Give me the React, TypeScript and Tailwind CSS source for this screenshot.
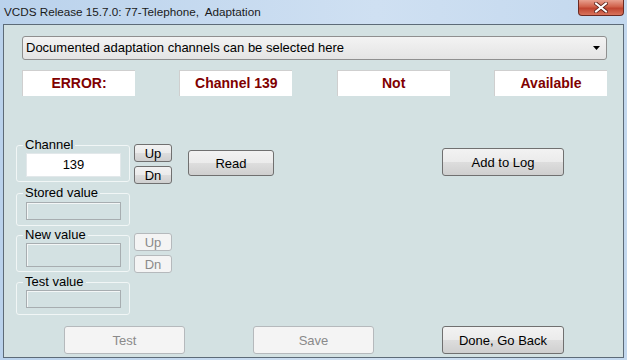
import React from 'react';

const font = { fontFamily: '"Liberation Sans", Arial, sans-serif' };

const Btn: React.FC<{ label: string; className?: string; disabled?: boolean }> = ({ label, className = '', disabled }) => (
    <button
        disabled={disabled}
        className={
            'flex items-center justify-center rounded-[3px] border text-[13px] leading-none ' +
            (disabled
                ? 'border-[#b5b9bc] bg-[#f4f4f4] text-[#8a8a8a] '
                : 'border-[#707070] bg-[linear-gradient(#f2f2f2_0%,#ebebeb_50%,#dddddd_51%,#cfcfcf_100%)] text-black ') +
            className
        }
    >
        {label}
    </button>
);

const Group: React.FC<{ label: string; children: React.ReactNode; className?: string }> = ({ label, children, className = '' }) => (
    <fieldset className={'w-[114px] rounded-[3px] border border-[#f1f6f6] pl-[9px] ' + className}>
        <legend className="-ml-[3px] px-[2px] text-[13px] leading-[14px] text-black">{label}</legend>
        {children}
    </fieldset>
);

const Status: React.FC<{ text: string }> = ({ text }) => (
    <div className="flex h-[26px] w-[113px] items-center justify-center border-l border-t border-[#cfcfcf] bg-white text-[14px] font-bold text-[#800000]">
        {text}
    </div>
);

const UpDn: React.FC<{ disabled?: boolean; className?: string }> = ({ disabled, className = '' }) => (
    <div className={'ml-[4px] flex flex-col gap-[4px] ' + className}>
        <Btn label="Up" disabled={disabled} className="h-[18px] w-[38px]" />
        <Btn label="Dn" disabled={disabled} className="h-[18px] w-[38px]" />
    </div>
);

export default function App() {
    return (
        <div style={font} className="flex h-[360px] w-[627px] flex-col overflow-hidden bg-[linear-gradient(90deg,#bad2ec,#cfe0f2_60%,#c3d8ee)]">
            {/* Title bar */}
            <div className="relative flex h-[24px] shrink-0 items-center pl-[4px]">
                <span className="whitespace-pre text-[11.7px] text-[#1a1a1a]">VCDS Release 15.7.0: 77-Telephone,  Adaptation</span>
                <div className="absolute right-[3px] top-0 flex h-[16px] w-[46px] items-center justify-center rounded-b-[4px] border border-t-0 border-[#6b2a22] bg-[linear-gradient(#e8a08e,#d0614a_45%,#c04530_55%,#d8735c)]">
                    <svg width="14" height="11" viewBox="0 0 14 11">
                        <path d="M2 1.5 L12 9.5 M12 1.5 L2 9.5" stroke="#5a2018" strokeWidth="3.6" strokeLinecap="square" />
                        <path d="M2 1.5 L12 9.5 M12 1.5 L2 9.5" stroke="#ffffff" strokeWidth="2" strokeLinecap="square" />
                    </svg>
                </div>
            </div>

            {/* Client area */}
            <div className="ml-[3px] mr-[3px] flex h-[334px] shrink-0 flex-col border border-[#5d6b78] bg-[#d3e1e2]">
                {/* Dropdown */}
                <div className="ml-[18px] mr-[16px] mt-[11px] flex h-[24px] items-center justify-between rounded-[3px] border border-[#8f8f8f] bg-[linear-gradient(#f3f3f3,#e4e4e4)] pl-[3px] pr-[6px]">
                    <span className="text-[13px] text-black">Documented adaptation channels can be selected here</span>
                    <svg width="7" height="4" viewBox="0 0 7 4">
                        <path d="M0 0 H7 L3.5 4 Z" fill="#000" />
                    </svg>
                </div>

                {/* Status row */}
                <div className="ml-[18px] mr-[16px] mt-[10px] flex justify-between">
                    <Status text="ERROR:" />
                    <Status text="Channel 139" />
                    <Status text="Not" />
                    <Status text="Available" />
                </div>

                {/* Middle */}
                <div className="ml-[12px] mt-[42px] flex flex-col gap-[2px]">
                    <div className="flex items-start">
                        <Group label="Channel" className="pb-[4px]">
                            <div className="mt-[1px] flex h-[24px] w-[95px] items-center justify-center border border-[#e2e8ea] bg-white text-[13px] text-black">139</div>
                        </Group>
                        <UpDn className="mt-[6px]" />
                        <Btn label="Read" className="ml-[16px] mt-[12px] h-[26px] w-[86px]" />
                        <Btn label="Add to Log" className="ml-[168px] mt-[10px] h-[28px] w-[122px]" />
                    </div>
                    <Group label="Stored value" className="pb-[5px]">
                        <div className="mt-[2px] h-[18px] w-[95px] border border-[#a7adb0] shadow-[inset_1px_1px_0_#f3f6f6]" />
                    </Group>
                    <div className="flex items-start">
                        <Group label="New value" className="pb-[4px]">
                            <div className="mt-[1px] h-[24px] w-[95px] border border-[#a7adb0] shadow-[inset_1px_1px_0_#f3f6f6]" />
                        </Group>
                        <UpDn disabled className="mt-[5px]" />
                    </div>
                    <Group label="Test value" className="pb-[6px]">
                        <div className="mt-[1px] h-[18px] w-[95px] border border-[#a7adb0] shadow-[inset_1px_1px_0_#f3f6f6]" />
                    </Group>
                </div>

                {/* Bottom buttons */}
                <div className="ml-[60px] mt-[11px] flex">
                    <Btn label="Test" disabled className="h-[28px] w-[121px]" />
                    <Btn label="Save" disabled className="ml-[68px] h-[28px] w-[121px]" />
                    <Btn label="Done, Go Back" className="ml-[68px] h-[28px] w-[122px]" />
                </div>
            </div>
        </div>
    );
}
